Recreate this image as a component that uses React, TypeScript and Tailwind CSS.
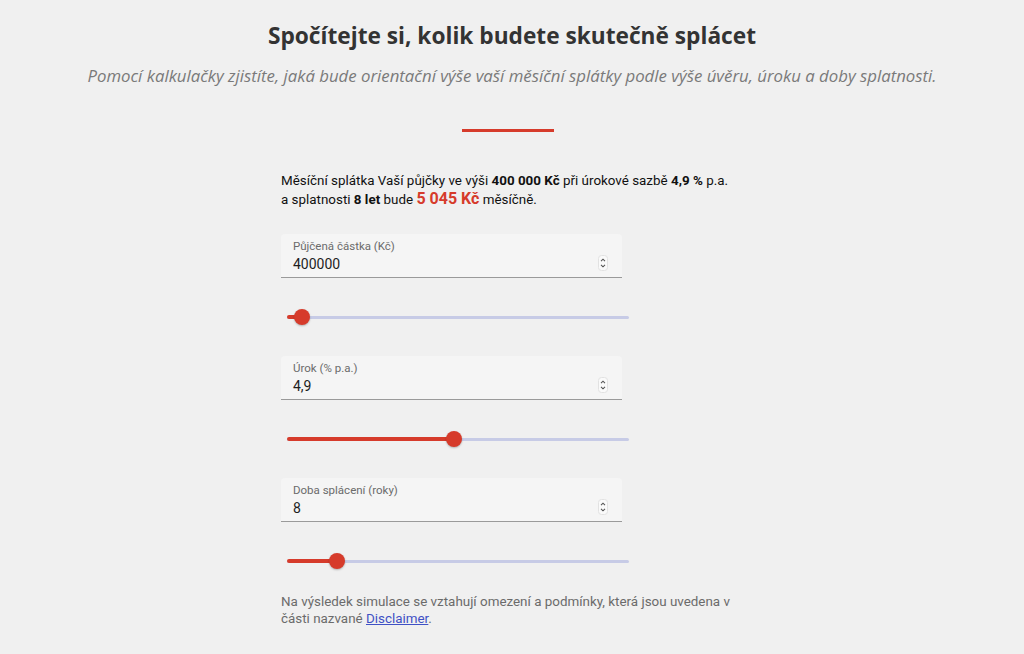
import React from 'react'

type Field = {
  label: string
  value: string
  percent: number
}

const fields: Field[] = [
  { label: 'Půjčená částka (Kč)', value: '400000', percent: 4.4 },
  { label: 'Úrok (% p.a.)', value: '4,9', percent: 48.8 },
  { label: 'Doba splácení (roky)', value: '8', percent: 14.6 },
]

function Spinner() {
  return (
    <svg width="10" height="16" viewBox="0 0 10 16" className="shrink-0">
      <rect x="0.5" y="0.5" width="9" height="15" rx="3" fill="#fafafa" stroke="#e2e2e2" />
      <path d="M3 6.2 L5 4.2 L7 6.2" fill="none" stroke="#555" strokeWidth="1.1" />
      <path d="M3 9.8 L5 11.8 L7 9.8" fill="none" stroke="#555" strokeWidth="1.1" />
    </svg>
  )
}

function NumberField({ label, value }: { label: string; value: string }) {
  return (
    <div className="w-[341px] h-[44px] bg-[#f5f5f5] rounded-t border-b border-[#9a9a9a] pl-3 pr-[14px] pt-[5px] flex items-end justify-between">
      <div className="flex flex-col pb-[3px]">
        <span className="text-[11.5px] leading-[14px] text-[#6b6b6b]">{label}</span>
        <span className="text-[14px] leading-[20px] text-[#1e1e1e] mt-[1px]">{value}</span>
      </div>
      <div className="pb-[6px]">
        <Spinner />
      </div>
    </div>
  )
}

function Slider({ percent }: { percent: number }) {
  return (
    <div className="relative ml-[6px] w-[342px] h-4 flex items-center">
      <div className="absolute left-0 right-0 h-[3px] rounded-full bg-[#c7cbe6]" />
      <div
        className="absolute left-0 h-[4px] rounded-full bg-[#d63b2b]"
        style={{ width: `${percent}%` }}
      />
      <div
        className="absolute w-4 h-4 -ml-2 rounded-full bg-[#d63b2b] shadow-[0_1px_2px_rgba(0,0,0,0.25)]"
        style={{ left: `${percent}%` }}
      />
    </div>
  )
}

export default function App() {
  return (
    <div className="min-h-[654px] bg-[#f0f0f0] flex flex-col items-center pt-[20px] font-['Roboto',sans-serif]">
      <h1 className="font-['Open_Sans',sans-serif] font-bold text-[22.7px] leading-[32px] text-[#333333]">
        Spočítejte si, kolik budete skutečně splácet
      </h1>
      <p className="mt-[12px] font-['Open_Sans',sans-serif] italic text-[16.8px] leading-[24px] text-[#7a7a7a] whitespace-nowrap">
        Pomocí kalkulačky zjistíte, jaká bude orientační výše vaší měsíční splátky podle výše úvěru, úroku a doby splatnosti.
      </p>
      <div className="mt-[41px] mr-[8px] w-[92px] h-[3px] bg-[#d63b2b]" />

      <div className="mt-[40px] w-[462px] flex flex-col">
        <p className="text-[13.4px] leading-[18px] text-[#111111]">
          <span className="block whitespace-nowrap">
            Měsíční splátka Vaší půjčky ve výši <b className="font-bold">400 000 Kč</b> při úrokové sazbě{' '}
            <b className="font-bold">4,9 %</b> p.a.
          </span>
          <span className="block whitespace-nowrap">
            a splatnosti <b className="font-bold">8 let</b> bude{' '}
            <b className="font-bold text-[16px] text-[#d63b2b]">5 045 Kč</b> měsíčně.
          </span>
        </p>

        <div className="mt-[25px] flex flex-col">
          {fields.map((f, i) => (
            <div key={f.label} className="flex flex-col">
              <NumberField label={f.label} value={f.value} />
              <div className={i < fields.length - 1 ? 'pt-[31px] pb-[31px]' : 'pt-[31px] pb-[24px]'}>
                <Slider percent={f.percent} />
              </div>
            </div>
          ))}
        </div>

        <p className="text-[13.4px] leading-[17px] text-[#6b6b6b]">
          <span className="block whitespace-nowrap">
            Na výsledek simulace se vztahují omezení a podmínky, která jsou uvedena v
          </span>
          <span className="block whitespace-nowrap">
            části nazvané{' '}
            <a className="text-[#3f51c5] underline" href="#">
              Disclaimer
            </a>
            .
          </span>
        </p>
      </div>
    </div>
  )
}
